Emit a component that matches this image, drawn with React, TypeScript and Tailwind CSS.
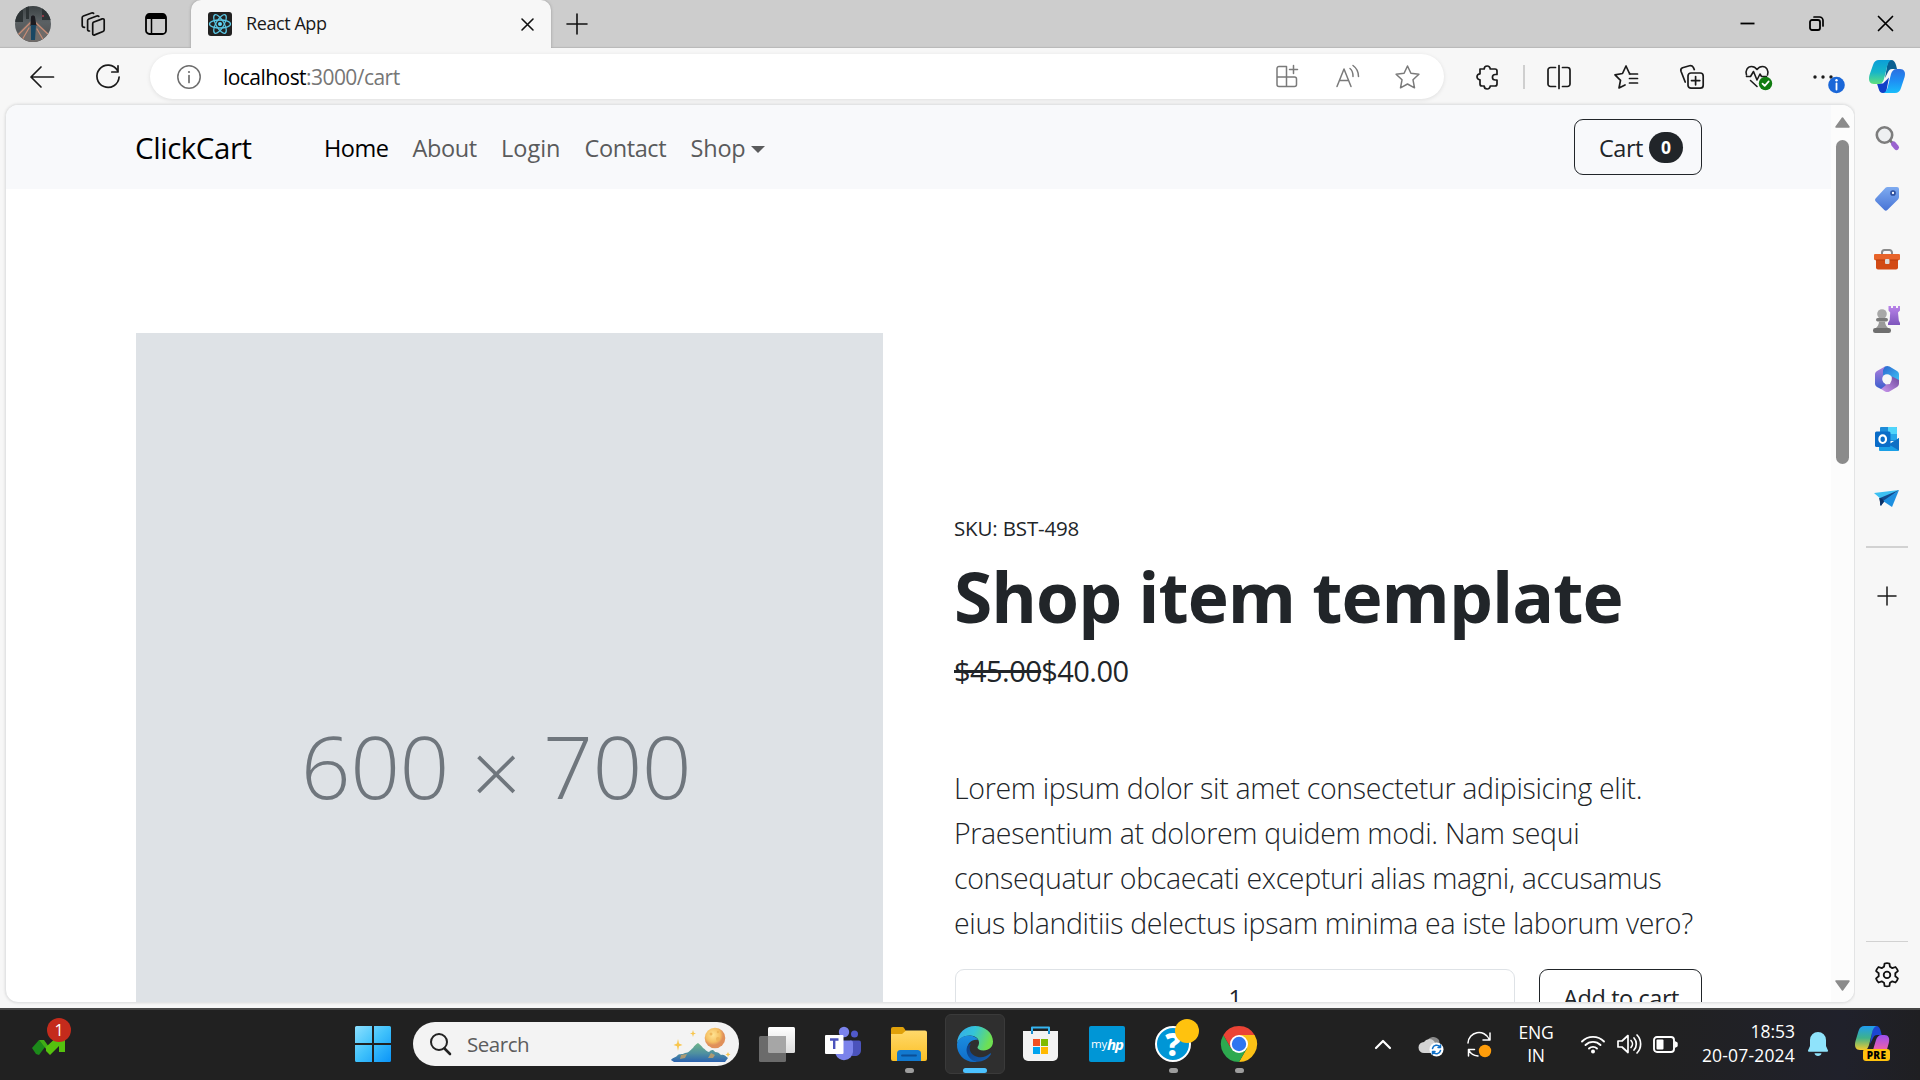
import React, { ReactNode } from "react";

type IconProps = { w: number; h: number; children: ReactNode; className?: string };

function Svg({ w, h, children, className = "" }: IconProps) {
  return (
    <svg
      width={w}
      height={h}
      viewBox={`0 0 ${w} ${h}`}
      fill="none"
      stroke="none"
      strokeLinecap="round"
      strokeLinejoin="round"
      className={`block shrink-0 overflow-visible ${className}`}
    >
      {children}
    </svg>
  );
}

function Avatar() {
  return (
    <Svg w={36} h={36}>
      <defs>
        <clipPath id="av"><circle cx="18" cy="18" r="18" /></clipPath>
        <linearGradient id="avg" x1="0" y1="0" x2="0" y2="1">
          <stop offset="0" stopColor="#3c4244" />
          <stop offset=".45" stopColor="#5b6164" />
          <stop offset="1" stopColor="#4c4a4a" />
        </linearGradient>
      </defs>
      <g clipPath="url(#av)">
        <rect width="36" height="36" fill="url(#avg)" />
        <path d="M0 4h8v12H0zM11 0h3v13h-3zM27 0h9v14h-9z" fill="#2d3335" />
        <path d="M15 15 0 30v6h36v-6L21 15z" fill="#6f6b69" />
        <path d="M15 17 2 30M14 22 7 34M21 17l13 12M22 23l7 12" stroke="#c98d76" strokeWidth="1.200" />
        <path d="M16 11c0-2 4-2 4 0l1.500 9h-6z" fill="#1c1b20" />
        <path d="M16 19h5l-1 15h-4z" fill="#1a4763" />
        <circle cx="28" cy="10" r="1" fill="#b03a4a" />
      </g>
    </Svg>
  );
}

function WorkspacesIcon() {
  return (
    <Svg w={24} h={24}>
      <g stroke="#111" strokeWidth="1.7">
        <path d="M12.3 10.2 21.2 6.9c1.2-.4 2 .1 2 1.300v9.600c0 .8-.4 1.400-1.200 1.700l-8.300 3.400c-1.200.5-2-.1-2-1.200v-9.800c0-.8.300-1.300.6-1.700z" />
        <path d="M8.500 19c-1.100 0-1.900-.6-1.900-1.600V8.600c0-.8.500-1.300 1.200-1.600l8-3c.9-.3 1.500-.1 2 .4" />
        <path d="M3.500 15.400C2 15.200 1.200 14.500 1.200 13.400V5.600c0-.8.5-1.300 1.200-1.600l8.200-3c.9-.3 1.600-.1 2 .4" />
      </g>
    </Svg>
  );
}

function TabPaneIcon() {
  return (
    <Svg w={22} h={22}>
      <rect x="1" y="1" width="20" height="20" rx="3.500" stroke="#000" strokeWidth="1.800" />
      <path d="M1 6V4a3 3 0 0 1 3-3h14a3 3 0 0 1 3 3v2z" fill="#000" />
      <path d="M6.500 6v15" stroke="#000" strokeWidth="1.500" />
    </Svg>
  );
}

function ReactLogo() {
  return (
    <Svg w={24} h={24}>
      <rect width="24" height="24" rx="3" fill="#222" />
      <g stroke="#61dafb" strokeWidth="1.300" opacity=".9">
        <ellipse cx="12" cy="12" rx="10.500" ry="4" />
        <ellipse cx="12" cy="12" rx="10.500" ry="4" transform="rotate(60 12 12)" />
        <ellipse cx="12" cy="12" rx="10.500" ry="4" transform="rotate(120 12 12)" />
      </g>
      <circle cx="12" cy="12" r="2" fill="#61dafb" />
    </Svg>
  );
}

function TitleBar() {
  return (
    <div className="flex h-12 shrink-0 bg-[#cdcdcd] shadow-[inset_0_-2px_1px_-1px_#b9b9b9]">
      <div className="flex w-[191px] items-center pl-[15px]">
        <Avatar />
        <div className="ml-[30px]"><WorkspacesIcon /></div>
        <div className="ml-[40px]"><TabPaneIcon /></div>
      </div>
      <div className="flex w-[360px] items-center rounded-t-[10px] bg-[#f7f7f7] pr-[17px] pl-[17px] shadow-[0_0_3px_#999] [clip-path:inset(0_-4px_0_-4px)]">
        <ReactLogo />
        <span className="ml-[14px] flex-1 pb-px text-[18px] tracking-[-0.42px] text-[#1a1a1a]">React App</span>
        <Svg w={13} h={13}><path d="M1 1l11 11M12 1 1 12" stroke="#111" strokeWidth="1.600" /></Svg>
      </div>
      <div className="flex flex-1 items-center pb-px pl-[16px]">
        <Svg w={20} h={20}><path d="M10 0v20M0 10h20" stroke="#111" strokeWidth="1.600" /></Svg>
      </div>
      <div className="flex items-center gap-[54px] pr-[27px] pb-px">
        <Svg w={15} h={15}><path d="M.5 7.500h14" stroke="#000" strokeWidth="1.800" strokeLinecap="butt" /></Svg>
        <Svg w={15} h={15}>
          <rect x="1" y="4" width="10" height="10" rx="2" stroke="#000" strokeWidth="1.800" />
          <path d="M5 1h5.500A3.500 3.500 0 0 1 14 4.500V10" stroke="#000" strokeWidth="1.700" />
        </Svg>
        <Svg w={15} h={15}><path d="M.5.500l14 14M14.500.500l-14 14" stroke="#000" strokeWidth="1.700" /></Svg>
      </div>
    </div>
  );
}

function CopilotLogo() {
  return (
    <Svg w={36} h={33}>
      <defs>
        <linearGradient id="cpa" x1="0" y1="0" x2="0" y2="1">
          <stop offset="0" stopColor="#0b9ed8" /><stop offset=".5" stopColor="#16b5c9" /><stop offset="1" stopColor="#5fe07d" />
        </linearGradient>
        <linearGradient id="cpb" x1="0" y1="0" x2="0" y2="1">
          <stop offset="0" stopColor="#2b6fe0" /><stop offset=".5" stopColor="#1e8ff5" /><stop offset="1" stopColor="#19bdfb" />
        </linearGradient>
      </defs>
      <path d="M19 0h3c3 0 4 2 5 5l1 4h-5c-2 0-3 1-4 3l-3 6z" fill="#0a5f92" />
      <path d="M17 33h-3c-2.500 0-3.500-1.500-4.300-4L8 23.500h6l6-6z" fill="#1140c9" />
      <path d="M10 0h13c-3 .5-4 3-5 7l-3 12c-1 3-2.500 5-6 5H5c-4 0-6-3-4.500-9L4 5c1-3.500 3-5 6-5z" fill="url(#cpa)" />
      <path d="M26 33H14c3-.5 4-3 5-7l3-12c1-3 2.500-5 6-5h3c4 0 6 3 4.600 8L32 28c-1 3.500-3 5-6 5z" fill="url(#cpb)" />
    </Svg>
  );
}

const BAR = "#1b1b1b";

function AddressBar() {
  return (
    <div className="flex h-[45px] w-[1294px] items-center rounded-full bg-white pr-[7px] pl-[27px] shadow-[0_1px_4px_rgba(0,0,0,0.1)]">
      <Svg w={24} h={24}>
        <circle cx="12" cy="12" r="11.200" stroke="#6e6e6e" strokeWidth="1.500" />
        <path d="M12 10.500v7" stroke="#6e6e6e" strokeWidth="1.700" />
        <circle cx="12" cy="7" r="1.100" fill="#6e6e6e" />
      </Svg>
      <span className="ml-[22px] flex-1 pt-[2px] text-[21px] tracking-[-0.55px] text-black">
        localhost<span className="text-[#767676]">:3000/cart</span>
      </span>
      <div className="flex w-[60px] justify-center">
        <Svg w={22} h={23}>
          <g stroke="#7a7a7a" strokeWidth="1.500">
            <path d="M10.500 1.500H3a2 2 0 0 0-2 2v16a2 2 0 0 0 2 2h15.500a2 2 0 0 0 2-2V14a2 2 0 0 0-2-2H1M10.500 1.500v20" />
            <path d="M17.500.500v8M13.500 4.500h8" />
          </g>
        </Svg>
      </div>
      <div className="flex w-[60px] justify-center">
        <Svg w={23} h={23}>
          <g stroke="#7a7a7a" strokeWidth="1.500">
            <path d="M1 21.500 8 4l7 17.500M3.500 15.500h9" />
            <path d="M14 3.500c2 1.500 3 4 3 8M17 .5c3.500 2.500 5.500 6 5.500 11" />
          </g>
        </Svg>
      </div>
      <div className="flex w-[60px] justify-center">
        <Svg w={25} h={24}>
          <path d="M12.500 1l3.400 7.300 8 1-5.900 5.500 1.500 8L12.500 19l-7 3.800 1.500-8L1.100 9.300l8-1z" stroke="#7a7a7a" strokeWidth="1.500" />
        </Svg>
      </div>
    </div>
  );
}

function Toolbar() {
  return (
    <div className="flex h-14 shrink-0 items-center bg-[#f7f7f7] pt-px">
      <div className="flex w-[150px] items-center pl-[30px]">
        <Svg w={24} h={22}><path d="M23.500 11H1M11 1 1 11l10 10" stroke={BAR} strokeWidth="1.700" /></Svg>
        <Svg w={24} h={24} className="ml-[42px]">
          <path d="M21.500 5.500A11.100 11.100 0 1 0 23.100 12M22 .8v6.200h-6.200" stroke={BAR} strokeWidth="1.700" />
        </Svg>
      </div>
      <AddressBar />
      <div className="flex w-[79px] items-center pl-[32px]">
        <Svg w={23} h={24}>
          <path
            d="M4 4h4.200a3 3 0 0 1 6 0H19a2 2 0 0 1 2 2v3.500h-1.800a2.700 2.700 0 0 0 0 5.500H21V19a2 2 0 0 1-2 2h-4.800a3 3 0 0 1-6 0H6a2 2 0 0 1-2-2v-4.200a3 3 0 0 1 0-6z"
            stroke={BAR}
            strokeWidth="1.700"
          />
        </Svg>
      </div>
      <div className="h-6 w-[2px] bg-[#cfcfcf]" />
      <div className="ml-px flex w-[66px] justify-center">
        <Svg w={24} h={24}>
          <path d="M8.500 2.500H3.500A2.500 2.500 0 0 0 1 5v14a2.500 2.500 0 0 0 2.500 2.500h5M15.500 2.500h5A2.500 2.500 0 0 1 23 5v14a2.500 2.500 0 0 1-2.500 2.500h-5M12 .5v23" stroke={BAR} strokeWidth="1.700" />
        </Svg>
      </div>
      <div className="flex w-[67px] justify-center">
        <Svg w={24} h={24}>
          <path d="M15 7.500 12 1 8.500 8.500 1 9.800l5.500 5.500L5 23l6-3M15.500 9h8M15.500 13.500h8M15.500 18h8M15 7.500l1 1.500" stroke={BAR} strokeWidth="1.700" />
        </Svg>
      </div>
      <div className="flex w-[66px] justify-center">
        <Svg w={24} h={24}>
          <g stroke={BAR} strokeWidth="1.700">
            <rect x="8" y="8" width="15.200" height="15.200" rx="3" />
            <path d="M15.600 11.500v8.300M11.500 15.600h8.300M5.200 17 1 6.200C.5 4.500 1 3.300 2.500 2.700L9.500.7c1.500-.4 3 .3 3.800 1.700l1 2.200" />
          </g>
        </Svg>
      </div>
      <div className="flex w-[66px] justify-center">
        <Svg w={26} h={24}>
          <g stroke={BAR} strokeWidth="1.600">
            <path d="M1.500 10C0 5.500 2.500 1.500 6.500 1.500c2.500 0 4.300 1.300 5.500 3 1.200-1.700 3-3 5.500-3 4 0 6.500 4 5 8.500" />
            <path d="M1.500 11.500h4l3-5 3.500 8.500 3-6 1.500 2.500h5M5.500 15.500l6.500 6" />
          </g>
          <circle cx="20.500" cy="18.500" r="6.700" fill="#107c10" />
          <path d="M17.500 18.700l2.200 2.200 4-4.500" stroke="#fff" strokeWidth="1.700" />
        </Svg>
      </div>
      <div className="flex w-[66px] justify-center">
        <Svg w={22} h={24}>
          <circle cx="2" cy="12" r="1.700" fill={BAR} />
          <circle cx="10" cy="12" r="1.700" fill={BAR} />
          <circle cx="18" cy="12" r="1.700" fill={BAR} />
          <circle cx="23.500" cy="20" r="8.300" fill="#1a67d8" />
          <path d="M23.500 18.500v6" stroke="#fff" strokeWidth="1.800" />
          <circle cx="23.500" cy="15.300" r="1.200" fill="#fff" />
        </Svg>
      </div>
      <div className="ml-[12px]"><CopilotLogo /></div>
    </div>
  );
}

function NavBar() {
  return (
    <nav className="flex h-[84px] shrink-0 items-center bg-[#f8f9fb] pr-[129px] pl-[129px] text-[23.5px]">
      <span className="w-[189px] pt-[3px] text-[29.5px] tracking-[-0.45px] text-black">ClickCart</span>
      <div className="flex flex-1 items-center pt-[4px] tracking-[-0.4px] text-[#5a5b5c]">
        <span className="w-[88.500px] tracking-[-0.5px] text-black">Home</span>
        <span className="w-[88.500px]">About</span>
        <span className="w-[83.500px] tracking-normal">Login</span>
        <span className="w-[106px]">Contact</span>
        <span className="tracking-[-0.2px]">Shop</span>
        <Svg w={14} h={7} className="ml-[5px]"><path d="M0 0h14L7 7z" fill="#5a5b5c" /></Svg>
      </div>
      <button className="flex h-14 w-32 items-center rounded-[9px] border-[1.500px] border-[#212529] pl-6 text-[#212529]">
        <span className="pt-[4px] tracking-[-0.49px]">Cart</span>
        <span className="ml-[6px] flex h-[31px] w-[34px] items-center justify-center rounded-full bg-[#212529] text-[17.5px] font-bold text-white">0</span>
      </button>
    </nav>
  );
}

function Product() {
  return (
    <section className="grid grid-cols-[747px_747px] gap-[72px] pt-[144px] pl-[130px] text-[#212529]">
      <div className="flex h-[872px] justify-center bg-[#dee2e6] pt-[385px] pr-[27px] text-[87.5px] leading-[94px] font-light tracking-[-0.5px] whitespace-pre text-[#6f767d]">
        600 <span className="relative top-[6px]">×</span> 700
      </div>
      <div className="pt-[179px] whitespace-nowrap">
        <div className="-ml-px text-[20.5px] leading-8 tracking-[-0.15px]">SKU: BST-498</div>
        <h1 className="-ml-px pt-[9px] text-[69.500px] leading-[86px] font-bold tracking-[-0.95px]">Shop item template</h1>
        <div className="-ml-px pt-[9px] text-[29px] leading-[45px] tracking-[-0.55px]">
          <span className="line-through decoration-[3px]">$45.00</span>
          <span>$40.00</span>
        </div>
        <p className="-ml-px pt-[73px] text-[28.500px] leading-[45px] font-light tracking-[-0.33px]">
          Lorem ipsum dolor sit amet consectetur adipisicing elit.<br />
          Praesentium at dolorem quidem modi. Nam sequi<br />
          consequatur obcaecati excepturi alias magni, accusamus<br />
          eius blanditiis delectus ipsam minima ea iste laborum vero?
        </p>
        <div className="flex gap-6 pt-[23px] text-[23.5px]">
          <div className="flex h-[57px] w-[561px] justify-center rounded-[9px] border-[1.500px] border-[#dee2e6] pt-[11px]">1</div>
          <button className="flex h-[57px] w-[163px] justify-center rounded-[9px] border-[1.500px] border-[#212529] pt-[11px] pl-px tracking-[-0.43px]">
            Add to cart
          </button>
        </div>
      </div>
    </section>
  );
}

function ScrollBar() {
  return (
    <div className="flex w-[23px] shrink-0 flex-col items-center bg-[#fcfcfc] pt-[12px] pb-[11px]">
      <Svg w={15} h={11}><path d="M7.500 1 14 10H1z" fill="#8b8b8b" stroke="#8b8b8b" strokeWidth="1.500" /></Svg>
      <div className="mt-[12px] h-[324px] w-[13px] rounded-full bg-[#8b8b8b]" />
      <Svg w={15} h={11} className="mt-auto"><path d="M7.500 10 14 1H1z" fill="#8b8b8b" stroke="#8b8b8b" strokeWidth="1.500" /></Svg>
    </div>
  );
}

function SideBar() {
  return (
    <aside className="flex w-[65px] shrink-0 flex-col items-center bg-[#f7f7f7] pt-1 pr-[2px]">
      <div className="flex h-[60px] items-center">
        <Svg w={24} h={24}>
          <circle cx="9.500" cy="9" r="7.700" stroke="#7d7d7d" strokeWidth="2.600" fill="#eef0f2" />
          <path d="M15 14.500l3 3" stroke="#777" strokeWidth="2.500" />
          <path d="M18.500 18l3 3.500" stroke="#9a63cf" strokeWidth="5" />
        </Svg>
      </div>
      <div className="mt-px flex h-[60px] items-center">
        <Svg w={24} h={24}>
          <defs><linearGradient id="tag" x1="0" y1="0" x2="0" y2="1"><stop stopColor="#7eabf0" /><stop offset="1" stopColor="#4874d6" /></linearGradient></defs>
          <path d="M12.500 0H22a2 2 0 0 1 2 2v8c0 1-.3 1.700-1 2.400L12.300 23c-1 1-2 1-3 0L.8 14.500c-1-1-1-2.200 0-3.200L10.500.8c.6-.5 1.200-.8 2-.8z" fill="url(#tag)" />
          <circle cx="18" cy="6" r="2" fill="#fff" stroke="#2e4f9e" strokeWidth="1.700" />
        </Svg>
      </div>
      <div className="flex h-[60px] items-center">
        <Svg w={26} h={21}>
          <path d="M8 6V3.500A2.500 2.500 0 0 1 10.500 1h5A2.500 2.500 0 0 1 18 3.500V6" stroke="#8a8a8a" strokeWidth="2" />
          <path d="M2 10h22v8.500a2 2 0 0 1-2 2H4a2 2 0 0 1-2-2z" fill="#d24a14" />
          <rect y="5" width="26" height="6" rx="1" fill="#e8642a" />
          <path d="M2 11h22" stroke="#b53c0e" strokeWidth="1" />
          <rect x="11" y="10" width="4.500" height="5" rx="1" fill="#dcdcdc" />
        </Svg>
      </div>
      <div className="flex h-[60px] items-center">
        <Svg w={27} h={27}>
          <defs><linearGradient id="rook" x1="0" y1="0" x2="0" y2="1"><stop stopColor="#b983ea" /><stop offset="1" stopColor="#7d55bb" /></linearGradient></defs>
          <path d="M15.500 0h2.500v2h2V0h3v2h2V0h2v4.500L25 6.500l.8 8 1.200 2.500v2H15v-2l1.700-3 .5-7.500-1.700-2z" fill="url(#rook)" />
          <circle cx="9" cy="8" r="4.800" fill="#a8a8a8" />
          <rect x="3" y="12" width="12" height="3.500" rx="1.700" fill="#7a7a7a" />
          <path d="M6 15.500h6c0 3 1.500 5 3.500 7h-13c2-2 3.500-4 3.500-7z" fill="#999" />
          <rect x="0" y="22" width="18" height="5" rx="2.300" fill="#6f6f6f" />
        </Svg>
      </div>
      <div className="flex h-[60px] items-center">
        <Svg w={24} h={26}>
          <defs>
            <linearGradient id="ma" x1="0" y1="0" x2="1" y2="1"><stop stopColor="#2d66cf" /><stop offset="1" stopColor="#3bc0f5" /></linearGradient>
            <linearGradient id="mb" x1="0" y1="0" x2="0" y2="1"><stop stopColor="#b07fdc" /><stop offset="1" stopColor="#3b5fce" /></linearGradient>
            <linearGradient id="mc" x1="0" y1="1" x2="1" y2="0"><stop stopColor="#cf9bf2" /><stop offset="1" stopColor="#6a4699" /></linearGradient>
          </defs>
          <path d="M24 12v5.500c0 1.500-.7 2.700-2 3.500l-7.500 4.400c-1.500.8-3 .8-4.500 0L6 23l-1-4 10-1 2-9z" fill="url(#mc)" />
          <path d="M10 .6 2 5C.7 5.800 0 7 0 8.500v9C0 19 .7 20.200 2 21l4 2 5-4-3-4 2-7z" fill="url(#mb)" />
          <path d="M10 .6c1.500-.8 3-.8 4.500 0L22 5c1.300.8 2 2 2 3.500V14l-7-3.500L8 12V4z" fill="url(#ma)" />
          <circle cx="12" cy="13" r="4.800" fill="#f7f7f7" />
        </Svg>
      </div>
      <div className="flex h-[60px] items-center">
        <Svg w={24} h={24}>
          <rect x="5" y="0" width="17" height="14" rx="1" fill="#1e8bd8" />
          <path d="M13 0h8a1 1 0 0 1 1 1v6h-9z" fill="#50d5fb" />
          <path d="M13 7h9v6h-9z" fill="#28a8ea" />
          <path d="M24 11v12a1 1 0 0 1-1 1H5a1 1 0 0 1-1-1v-8l9 3z" fill="#1a9fe6" />
          <path d="M24 11v12.500L14 17.500z" fill="#0f6fc4" />
          <rect x="0" y="4.500" width="15.500" height="15.500" rx="1.500" fill="#0a6cc8" />
          <ellipse cx="7.700" cy="12.200" rx="3.300" ry="3.800" stroke="#fff" strokeWidth="2.200" />
        </Svg>
      </div>
      <div className="flex h-[60px] items-center">
        <Svg w={25} h={18}>
          <path d="M0 3 25 0 8 10z" fill="#3cc0f2" />
          <path d="M25 0 6 8v8l4-4z" fill="#134a8c" />
          <path d="M25 0 18 17l-9-6z" fill="#1d8fe0" />
          <path d="M5 8l3 .5 2 3-3 4.500z" fill="#0d3166" />
        </Svg>
      </div>
      <div className="mt-[17px] h-[1.500px] w-[42px] bg-[#d2d2d2]" />
      <Svg w={18} h={18} className="mt-[39px]"><path d="M9 0v18M0 9h18" stroke={BAR} strokeWidth="1.500" /></Svg>
      <div className="mt-auto h-[1.500px] w-[42px] bg-[#d2d2d2]" />
      <Svg w={26} h={26} className="mt-[20px] mb-[20px]">
        <g stroke="#111" strokeWidth="1.800">
          <path d="M10.600 1.500c1.600-.4 3.200-.4 4.800 0l.6 3.300 2.300 1.300 3.200-1.100c1.100 1.200 1.900 2.500 2.400 4.100l-2.600 2.200v2.900l2.600 2.200c-.5 1.600-1.300 2.900-2.400 4.100l-3.200-1.200-2.300 1.400-.6 3.300c-1.600.4-3.200.4-4.800 0l-.6-3.300-2.300-1.400-3.200 1.200c-1.100-1.200-1.900-2.500-2.400-4.100l2.600-2.200v-2.900L2.100 9.100C2.600 7.500 3.400 6.200 4.500 5l3.200 1.100L10 4.800z" />
          <circle cx="13" cy="12.900" r="3.300" />
        </g>
      </Svg>
    </aside>
  );
}

function SearchBox() {
  return (
    <div className="flex h-[44px] w-[326px] items-center rounded-full bg-[#f3f3f3] pr-[8px] pl-[16px]">
      <Svg w={22} h={22}>
        <circle cx="10" cy="9" r="8" stroke="#222" strokeWidth="2" />
        <path d="M15.500 15.500l5.500 5.500" stroke="#222" strokeWidth="2.600" />
      </Svg>
      <span className="ml-[16px] flex-1 text-[20.5px] tracking-[-0.47px] text-[#5c5c5c]">Search</span>
      <Svg w={62} h={36}>
        <defs>
          <linearGradient id="hill" x1="0" y1="0" x2="0" y2="1"><stop stopColor="#6fb58a" /><stop offset=".55" stopColor="#4e8fa0" /><stop offset="1" stopColor="#2b62b0" /></linearGradient>
          <radialGradient id="moon" cx=".4" cy=".35"><stop stopColor="#ffe494" /><stop offset=".7" stopColor="#f5c063" /><stop offset="1" stopColor="#e0905a" /></radialGradient>
        </defs>
        <circle cx="46" cy="12" r="10.300" fill="url(#moon)" />
        <circle cx="42" cy="8" r="1.500" fill="#eeb65a" /><circle cx="49" cy="13" r="2" fill="#eeb65a" /><circle cx="49" cy="6" r="1.200" fill="#eeb65a" />
        <path d="M9 13l1 4.500 3.500 1.500-3.500 1.200L9 25l-1-4.800L4.500 19 8 17.500zM24 4l.8 2.700L27 7.500l-2.200.8L24 11l-.8-2.700-2.200-.8 2.200-.8zM59 26l.8 1.700 1.700.8-1.700.8L59 31l-.8-1.700-1.700-.8 1.700-.8z" fill="#f8c64e" />
        <path d="M2 34c2-3 4-2 6-4 2-3 5-1 8-3 4 0 5-3 8-5 1-2 3-4 5-5 2 2 4 3 5 5 2 1 4 4 6 4 2-2 4-3 6 0 3 0 4 1 6 3 2-1 4 0 7 3l-3 4H5z" fill="url(#hill)" />
        <path d="M12 29l6-1-2 4-5 1zM42 27l4 2-2 3-5 0z" fill="#d9a45c" opacity=".7" />
      </Svg>
    </div>
  );
}

function AppSlot({ children, running = false, active = false }: { children: ReactNode; running?: boolean; active?: boolean }) {
  return (
    <div className="relative flex h-[70px] w-[66px] items-center justify-center">
      {active && <div className="absolute top-[5px] left-[3px] h-[60px] w-[60px] rounded-[6px] border border-[#3a3a3a] bg-[#2f2f2f]" />}
      <div className="relative">{children}</div>
      {running && <div className="absolute bottom-[6px] h-[5px] w-[9px] rounded-full bg-[#9d9d9d]" />}
      {active && <div className="absolute bottom-[6px] h-[5px] w-[24px] rounded-full bg-[#4cc2ff]" />}
    </div>
  );
}

function TaskApps() {
  return (
    <div className="ml-[5px] flex">
      <AppSlot>
        <Svg w={36} h={34}>
          <defs><linearGradient id="tv" x1="0" y1="0" x2="0" y2="1"><stop stopColor="#fff" /><stop offset="1" stopColor="#dcdcdc" /></linearGradient></defs>
          <rect x="9" y="0" width="27" height="26" rx="1.500" fill="url(#tv)" />
          <rect x="0" y="9" width="27" height="26" rx="1.500" fill="#6b6b6b" />
          <path d="M9 9h18v17H10.500A1.500 1.500 0 0 1 9 24.500z" fill="#a6a6a6" />
        </Svg>
      </AppSlot>
      <AppSlot>
        <Svg w={36} h={34}>
          <circle cx="29.500" cy="7" r="3.500" fill="#5059c9" />
          <path d="M25 13.500h9a2 2 0 0 1 2 2V23c0 4-3 6-6 6h-3z" fill="#4b53bc" />
          <circle cx="19" cy="5" r="5.200" fill="#7b83eb" />
          <path d="M11 13.500h15a2 2 0 0 1 2 2V25a9 9 0 0 1-17.500 2z" fill="#7b83eb" />
          <rect x="0" y="8" width="18.500" height="19" rx="1" fill="#fff" />
          <path d="M5 12.500h8.500M9.200 12.500v9.500" stroke="#4b53bc" strokeWidth="2.400" strokeLinecap="butt" />
        </Svg>
      </AppSlot>
      <AppSlot running>
        <Svg w={36} h={34}>
          <defs><linearGradient id="fo" x1="0" y1="0" x2="0" y2="1"><stop stopColor="#ffd96b" /><stop offset="1" stopColor="#fbbf24" /></linearGradient></defs>
          <path d="M0 2a2 2 0 0 1 2-2h9c1 0 1.500.3 2 1l2 3v6H0z" fill="#e0a10a" />
          <path d="M0 7h11l4-3.500h19a2 2 0 0 1 2 2V32a2 2 0 0 1-2 2H2a2 2 0 0 1-2-2z" fill="url(#fo)" />
          <path d="M6 34V26.500A3.500 3.500 0 0 1 9.500 23h17a3.500 3.500 0 0 1 3.500 3.500V34z" fill="#1279cf" />
          <path d="M11 28.500h14" stroke="#0b4f96" strokeWidth="1.800" />
        </Svg>
      </AppSlot>
      <AppSlot active>
        <Svg w={36} h={36}>
          <defs>
            <linearGradient id="ea" x1="0" y1="0" x2="1" y2=".3"><stop stopColor="#35a8ee" /><stop offset=".5" stopColor="#34c4d8" /><stop offset="1" stopColor="#6ee052" /></linearGradient>
            <linearGradient id="eb" x1="0" y1="0" x2="0" y2="1"><stop stopColor="#1b8ee0" /><stop offset="1" stopColor="#0f6cc9" /></linearGradient>
            <linearGradient id="ec" x1="0" y1="0" x2="1" y2="1"><stop stopColor="#0a3c86" /><stop offset="1" stopColor="#1560b0" /></linearGradient>
          </defs>
          <path d="M0 17C.5 7 8.500 0 18 0c10 0 18 7 18 15.500 0 5.500-4 9-9.500 9-4 0-6-1.500-6-3 0-1 1.500-1.500 1.500-5 0-4-4-7-9-7C7 9.500 2 12.500 0 17z" fill="url(#ea)" />
          <path d="M0 18c1-5 6-8.500 12-8.500 4 0 7.500 1.500 9.200 4.500-5-1.500-11 2-11 9 0 6 4.500 11 10 12.500-1 .4-2 .5-3 .5C7 36-.5 28 0 18z" fill="url(#eb)" />
          <path d="M14 17.500c-2.500 4-1.500 9 3 12 5 3 12 2 16-2 .8-.5 1.200.2.800 1C31 33 25 36 20 35.700c-6-.7-10.500-6-10.500-12 0-3.500 2-5.200 4.500-6.200z" fill="url(#ec)" />
        </Svg>
      </AppSlot>
      <AppSlot>
        <Svg w={35} h={36} className="-ml-[2px]">
          <path d="M9 6V1.500h17V6" stroke="#35b4f0" strokeWidth="2" strokeLinecap="butt" />
          <path d="M0 5h35v25a5 5 0 0 1-5 5H5a5 5 0 0 1-5-5z" fill="#f3f3f3" />
          <path d="M9 5v3M26 5v3" stroke="#1c8fd0" strokeWidth="2" strokeLinecap="butt" />
          <path d="M10 13h7v7h-7z" fill="#f25022" /><path d="M18 13h7v7h-7z" fill="#7fba00" />
          <path d="M10 21h7v7h-7z" fill="#00a4ef" /><path d="M18 21h7v7h-7z" fill="#ffb900" />
        </Svg>
      </AppSlot>
      <AppSlot>
        <div className="flex h-9 w-9 items-center justify-center rounded-[2px] bg-[#0096d6] text-[11.500px] leading-none tracking-[-0.3px] text-white">
          my<span className="text-[15px] font-bold tracking-[-1px] italic">hp</span>
        </div>
      </AppSlot>
      <AppSlot running>
        <div className="relative flex h-9 w-9 items-center justify-center rounded-full border-2 border-white bg-[#0096d6] text-[31px] leading-none font-extrabold text-white">
          ?
          <div className="absolute -top-[9px] -right-[10px] h-6 w-6 rounded-full bg-[#ffc20e]" />
        </div>
      </AppSlot>
      <AppSlot running>
        <Svg w={36} h={36}>
          <path d="M18 18V9h15.600A18 18 0 0 1 18 36l7.800-13.500z" fill="#fbc116" />
          <path d="M18 18l7.800 4.500L18 36A18 18 0 0 1 2.400 9l7.800 13.500z" fill="#2da94f" />
          <path d="M2.400 9A18 18 0 0 1 33.600 9H18v9l-7.800 4.500z" fill="#ea4335" />
          <circle cx="18" cy="18" r="9" fill="#fff" />
          <circle cx="18" cy="18" r="7.200" fill="#2f76f0" />
        </Svg>
      </AppSlot>
    </div>
  );
}

function Tray() {
  return (
    <div className="ml-auto flex h-full items-center text-[17.5px] text-white">
      <Svg w={16} h={9}><path d="M1 8l7-7 7 7" stroke="#fff" strokeWidth="2.200" /></Svg>
      <Svg w={24} h={21} className="mt-[2px] ml-[28px]">
        <path d="M8 6a7 7 0 0 1 12-1l1 6-10 1z" fill="#8b8b8b" />
        <path d="M5 18a5.500 5.500 0 0 1 0-11 6.500 6.500 0 0 1 10-1l3 6-3 6z" fill="#d4d4d4" />
        <circle cx="17.500" cy="14.500" r="7" fill="#fff" />
        <path d="M13.500 13.500a4.200 4.200 0 0 1 7.500-1.500M21.500 10v2.500H19M21.500 15.500a4.200 4.200 0 0 1-7.500 1.500M13.500 19v-2.500H16" stroke="#1071c9" strokeWidth="1.500" />
      </Svg>
      <Svg w={24} h={25} className="ml-[24px]">
        <path d="M1 11A11 11 0 0 1 22 7M23 1v7h-7M1.500 24v-6.500h6M1.500 17.500C3 21 6 23.500 11 24" stroke="#fff" strokeWidth="1.500" />
        <circle cx="18" cy="19" r="6.200" fill="#ff9d0a" />
      </Svg>
      <div className="mr-px ml-[27px] w-[36px] text-center leading-[23px] tracking-[-0.2px]">ENG<br />IN</div>
      <Svg w={24} h={18} className="ml-[26px]">
        <g stroke="#fff" strokeWidth="1.900">
          <path d="M1 6.500a15.500 15.500 0 0 1 22 0M4.500 10a10.500 10.500 0 0 1 15 0M8 13.500a5.700 5.700 0 0 1 8 0" />
        </g>
        <circle cx="12" cy="16.500" r="2" fill="#fff" />
      </Svg>
      <Svg w={25} h={20} className="ml-[12px]">
        <path d="M1 7v6h4l6 5.500v-17L5 7zM14 6.500a5 5 0 0 1 0 7M17 4a9 9 0 0 1 0 12M20 1a13 13 0 0 1 0 18" stroke="#fff" strokeWidth="1.700" />
      </Svg>
      <Svg w={25} h={17} className="ml-[11px]">
        <rect x="1" y="1" width="20" height="15" rx="3" stroke="#fff" strokeWidth="1.900" />
        <rect x="3.500" y="3.500" width="7" height="10" rx="1" fill="#fff" />
        <path d="M22.500 6v5l1.500-1V7z" fill="#fff" stroke="#fff" strokeWidth="1.400" />
      </Svg>
      <div className="ml-[22px] w-[95px] pb-[3px] text-right leading-[24px] whitespace-nowrap">18:53<br /><span className="tracking-[0.18px]">20-07-2024</span></div>
      <Svg w={20} h={24} className="ml-[13px]">
        <path d="M10 0a8 8 0 0 1 8 8v6l2 4.500c.2.700-.1 1.200-.8 1.200H.8c-.7 0-1-.5-.8-1.200L2 14V8a8 8 0 0 1 8-8z" fill="#8fe3fb" />
        <path d="M6.500 21.300h7a3.600 3.600 0 0 1-7 0z" fill="#8fe3fb" />
      </Svg>
      <div className="relative mr-[30px] ml-[27px] h-[36px] w-[35px]">
        <Svg w={35} h={34}>
          <defs>
            <linearGradient id="ca" x1="0" y1="0" x2="0" y2="1"><stop stopColor="#1f9cf0" /><stop offset=".5" stopColor="#3fb28a" /><stop offset="1" stopColor="#f5cb2e" /></linearGradient>
            <linearGradient id="cb" x1="0" y1="0" x2="0" y2="1"><stop stopColor="#9b4ff0" /><stop offset=".6" stopColor="#e65fb0" /><stop offset="1" stopColor="#f87b5f" /></linearGradient>
          </defs>
          <path d="M18 0h3c3 0 4 2 4.700 5l1 4H22c-2 0-3 1-4 3l-3 6z" fill="#1c46d2" />
          <path d="M9.500 0H22c-3 .5-4 3-5 7l-3 12c-1 3-2 5-5.500 5H5c-4 0-6-3-4.500-9L3.500 5c1-3.500 3-5 6-5z" fill="url(#ca)" />
          <path d="M24 31H13c3-.5 4-3 5-7l3-10c1-3 2.500-5 6-5h2.500c4 0 5.500 3 4.300 8L31 27c-1 3-3 4-7 4z" fill="url(#cb)" />
        </Svg>
        <div className="absolute top-[23px] left-[8px] flex h-[12px] w-[27px] items-center justify-center rounded-[3px] bg-[#ffc20e] text-[10px] leading-none font-extrabold tracking-[0.3px] text-black">
          PRE
        </div>
      </div>
    </div>
  );
}

function TaskBar() {
  return (
    <footer className="flex h-[72px] shrink-0 items-center border-t-2 border-[#464646] bg-[linear-gradient(90deg,#212121_0%,#212121_86%,#20212b_96%,#1f1f22_100%)] pb-[2px]">
      <div className="relative ml-[32px] h-[36px] w-[38px]">
        <Svg w={38} h={36} className="-mt-[4px]">
          <path d="M0 26l7-8 6 7-6 8-3-1z" fill="#1c8a1a" />
          <path d="M7 18l11 14 7-8-3-4-5 5-5-7z" fill="#3fae16" />
          <path d="M14 25l14-13h5v18h-6v-6l-9 9-4-4z" fill="#55c20e" />
        </Svg>
        <div className="absolute -top-[8px] left-[15px] flex h-6 w-6 items-center justify-center rounded-full bg-[#c42b1c] text-[16px] text-white">1</div>
      </div>
      <div className="ml-[285px]">
        <Svg w={36} h={36}>
          <defs><linearGradient id="win" x1="0" y1="0" x2="1" y2="1"><stop stopColor="#8ce0ff" /><stop offset=".5" stopColor="#3fc1fb" /><stop offset="1" stopColor="#0a94f8" /></linearGradient></defs>
          <path d="M1.500 0H17v17H0V1.500A1.500 1.500 0 0 1 1.500 0zM19 0h15.500A1.500 1.500 0 0 1 36 1.500V17H19zM0 19h17v17H1.500A1.500 1.500 0 0 1 0 34.500zM19 19h17v15.500a1.500 1.500 0 0 1-1.500 1.500H19z" fill="url(#win)" />
        </Svg>
      </div>
      <div className="ml-[22px]"><SearchBox /></div>
      <TaskApps />
      <Tray />
    </footer>
  );
}

export default function App() {
  return (
    <div className="flex h-[1080px] w-[1920px] flex-col overflow-hidden bg-[#f7f7f7] font-['Open_Sans',sans-serif]">
      <TitleBar />
      <Toolbar />
      <div className="flex h-[904px] shrink-0">
        <div className="mb-[5px] ml-[5px] flex w-[1850px] overflow-hidden rounded-[13px] border border-[#e3e4e5] bg-white shadow-[0_0_3px_rgba(0,0,0,0.12)]">
          <div className="flex min-w-0 flex-1 flex-col overflow-hidden">
            <NavBar />
            <Product />
          </div>
          <ScrollBar />
        </div>
        <SideBar />
      </div>
      <TaskBar />
    </div>
  );
}
